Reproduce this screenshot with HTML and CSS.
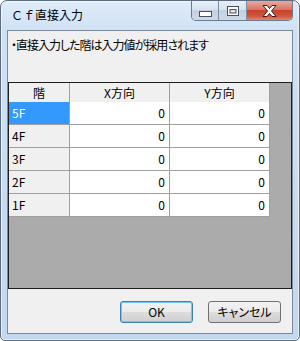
FILE: index.html
```html
<!DOCTYPE html>
<html lang="ja">
<head>
<meta charset="utf-8">
<title>Ｃｆ直接入力</title>
<link rel="stylesheet" href="styles.css">
</head>
<body>
<div class="window">
  <div class="titlebar">
    <span class="title">Ｃｆ直接入力</span>
    <div class="controls">
      <div class="ctl min">
        <svg width="13" height="6" viewBox="0 0 13 6"><rect x="0.5" y="0.5" width="12" height="5" fill="#fff" stroke="#47525f"/></svg>
      </div>
      <div class="ctl max">
        <svg width="12" height="10" viewBox="0 0 12 10"><rect x="0.5" y="0.5" width="11" height="9" fill="#fff" stroke="#47525f"/><rect x="3" y="3.5" width="6" height="3.5" fill="#dfe6ee" stroke="#47525f"/></svg>
      </div>
      <div class="ctl close">
        <svg width="15" height="12" viewBox="0 0 15 12"><path d="M1 0.5h4l2.5 3 2.5-3h4l-4.5 5.5 4.5 5.5h-4l-2.5-3-2.5 3h-4l4.5-5.5z" fill="#fff" stroke="#4b1a14" stroke-width="1" stroke-linejoin="round"/></svg>
      </div>
    </div>
  </div>
  <div class="client">
    <p class="msg">・直接入力した階は入力値が採用されます</p>
    <div class="grid">
      <div class="row head">
        <div class="c rh">階</div><div class="c hx">X方向</div><div class="c hx">Y方向</div>
      </div>
      <div class="row">
        <div class="c rh sel">5F</div><div class="c num">0</div><div class="c num">0</div>
      </div>
      <div class="row">
        <div class="c rh">4F</div><div class="c num">0</div><div class="c num">0</div>
      </div>
      <div class="row">
        <div class="c rh">3F</div><div class="c num">0</div><div class="c num">0</div>
      </div>
      <div class="row">
        <div class="c rh">2F</div><div class="c num">0</div><div class="c num">0</div>
      </div>
      <div class="row">
        <div class="c rh">1F</div><div class="c num">0</div><div class="c num">0</div>
      </div>
    </div>
    <div class="buttons">
      <button class="btn default">OK</button>
      <button class="btn">キャンセル</button>
    </div>
  </div>
</div>
</body>
</html>
```
FILE: styles.css
```css
html, body {
  margin: 0;
  padding: 0;
  background: #ffffff;
}
body {
  width: 300px;
  height: 341px;
  overflow: hidden;
  font-family: "Noto Sans CJK JP", "Liberation Sans", sans-serif;
  color: #000;
}
.window {
  box-sizing: border-box;
  width: 300px;
  height: 341px;
  border: 1px solid #5d6c7e;
  border-radius: 7px 7px 5px 5px;
  background: linear-gradient(180deg, #dfecf9 0px, #cfe1f4 30px, #c2d8ee 100%);
  box-shadow: inset 0 0 0 1px rgba(255,255,255,0.6);
  padding: 0 6px 6px;
  display: flex;
  flex-direction: column;
}
.titlebar {
  height: 29px;
  display: flex;
  align-items: flex-start;
  flex: none;
}
.title {
  margin-top: 6px;
  padding-left: 4px;
  font-size: 12px;
  line-height: 16px;
  color: #000;
}
.controls {
  margin-left: auto;
  display: flex;
  height: 19px;
  border: 1px solid #6a7b90;
  border-top: none;
  border-radius: 0 0 5px 5px;
  overflow: hidden;
}
.ctl {
  display: flex;
  align-items: center;
  justify-content: center;
  height: 19px;
  background: linear-gradient(180deg, #e8eff7 0%, #d8e2ee 45%, #c4d1e0 50%, #cdd9e7 100%);
}
.min { width: 26px; border-right: 1px solid #7e8ea2; }
.min svg { margin-top: 6px; }
.max { width: 27px; border-right: 1px solid #7e8ea2; }
.close {
  width: 45px;
  background: linear-gradient(180deg, #e9a99c 0%, #d77664 45%, #c7432c 50%, #d0553f 80%, #e08a6c 100%);
}
.client {
  flex: 1;
  background: #f0f0f0;
  border: 1px solid #7d8a99;
  display: flex;
  flex-direction: column;
  min-height: 0;
}
.msg {
  margin: 6px 0 29px;
  padding-left: 3px;
  font-size: 12px;
  line-height: 16px;
  letter-spacing: -1px;
  font-feature-settings: "palt";
  white-space: nowrap;
}
.grid {
  height: 207px;
  box-sizing: border-box;
  border: 1px solid #1e1e1e;
  background: #ababab;
  display: flex;
  flex-direction: column;
  flex: none;
}
.row {
  display: flex;
  height: 23px;
  flex: none;
}
.row.head {
  height: 19px;
}
.c {
  box-sizing: border-box;
  width: 100px;
  border-right: 1px solid #a0a0a0;
  border-bottom: 1px solid #a0a0a0;
  background: #fff;
  font-size: 12px;
  line-height: 22px;
  white-space: nowrap;
}
.head .c {
  background: #f0f0f0;
  border-bottom: none;
  text-align: center;
  line-height: 19px;
}
.c.rh {
  width: 61px;
  background: #f0f0f0;
  padding-left: 3px;
}
.head .c.rh {
  padding-left: 0;
}
.c.sel {
  background: #3399ff;
  color: #fff;
}
.c.num {
  text-align: right;
  padding-right: 4px;
}
.buttons {
  margin-top: auto;
  display: flex;
  justify-content: flex-end;
  gap: 15px;
  padding: 0 11px 10px 0;
}
.btn {
  box-sizing: border-box;
  width: 73px;
  height: 22px;
  padding: 0;
  border: 1px solid #707070;
  border-radius: 3px;
  background: linear-gradient(180deg, #f2f2f2 0%, #ebebeb 50%, #dddddd 51%, #cfcfcf 100%);
  font-family: "Noto Sans CJK JP", "Liberation Sans", sans-serif;
  font-size: 12px;
  line-height: 18px;
  color: #000;
  font-feature-settings: "palt";
}
.btn.default {
  border-color: #3c7fb1;
  box-shadow: inset 0 0 0 1px #6fc9f2;
}
```
